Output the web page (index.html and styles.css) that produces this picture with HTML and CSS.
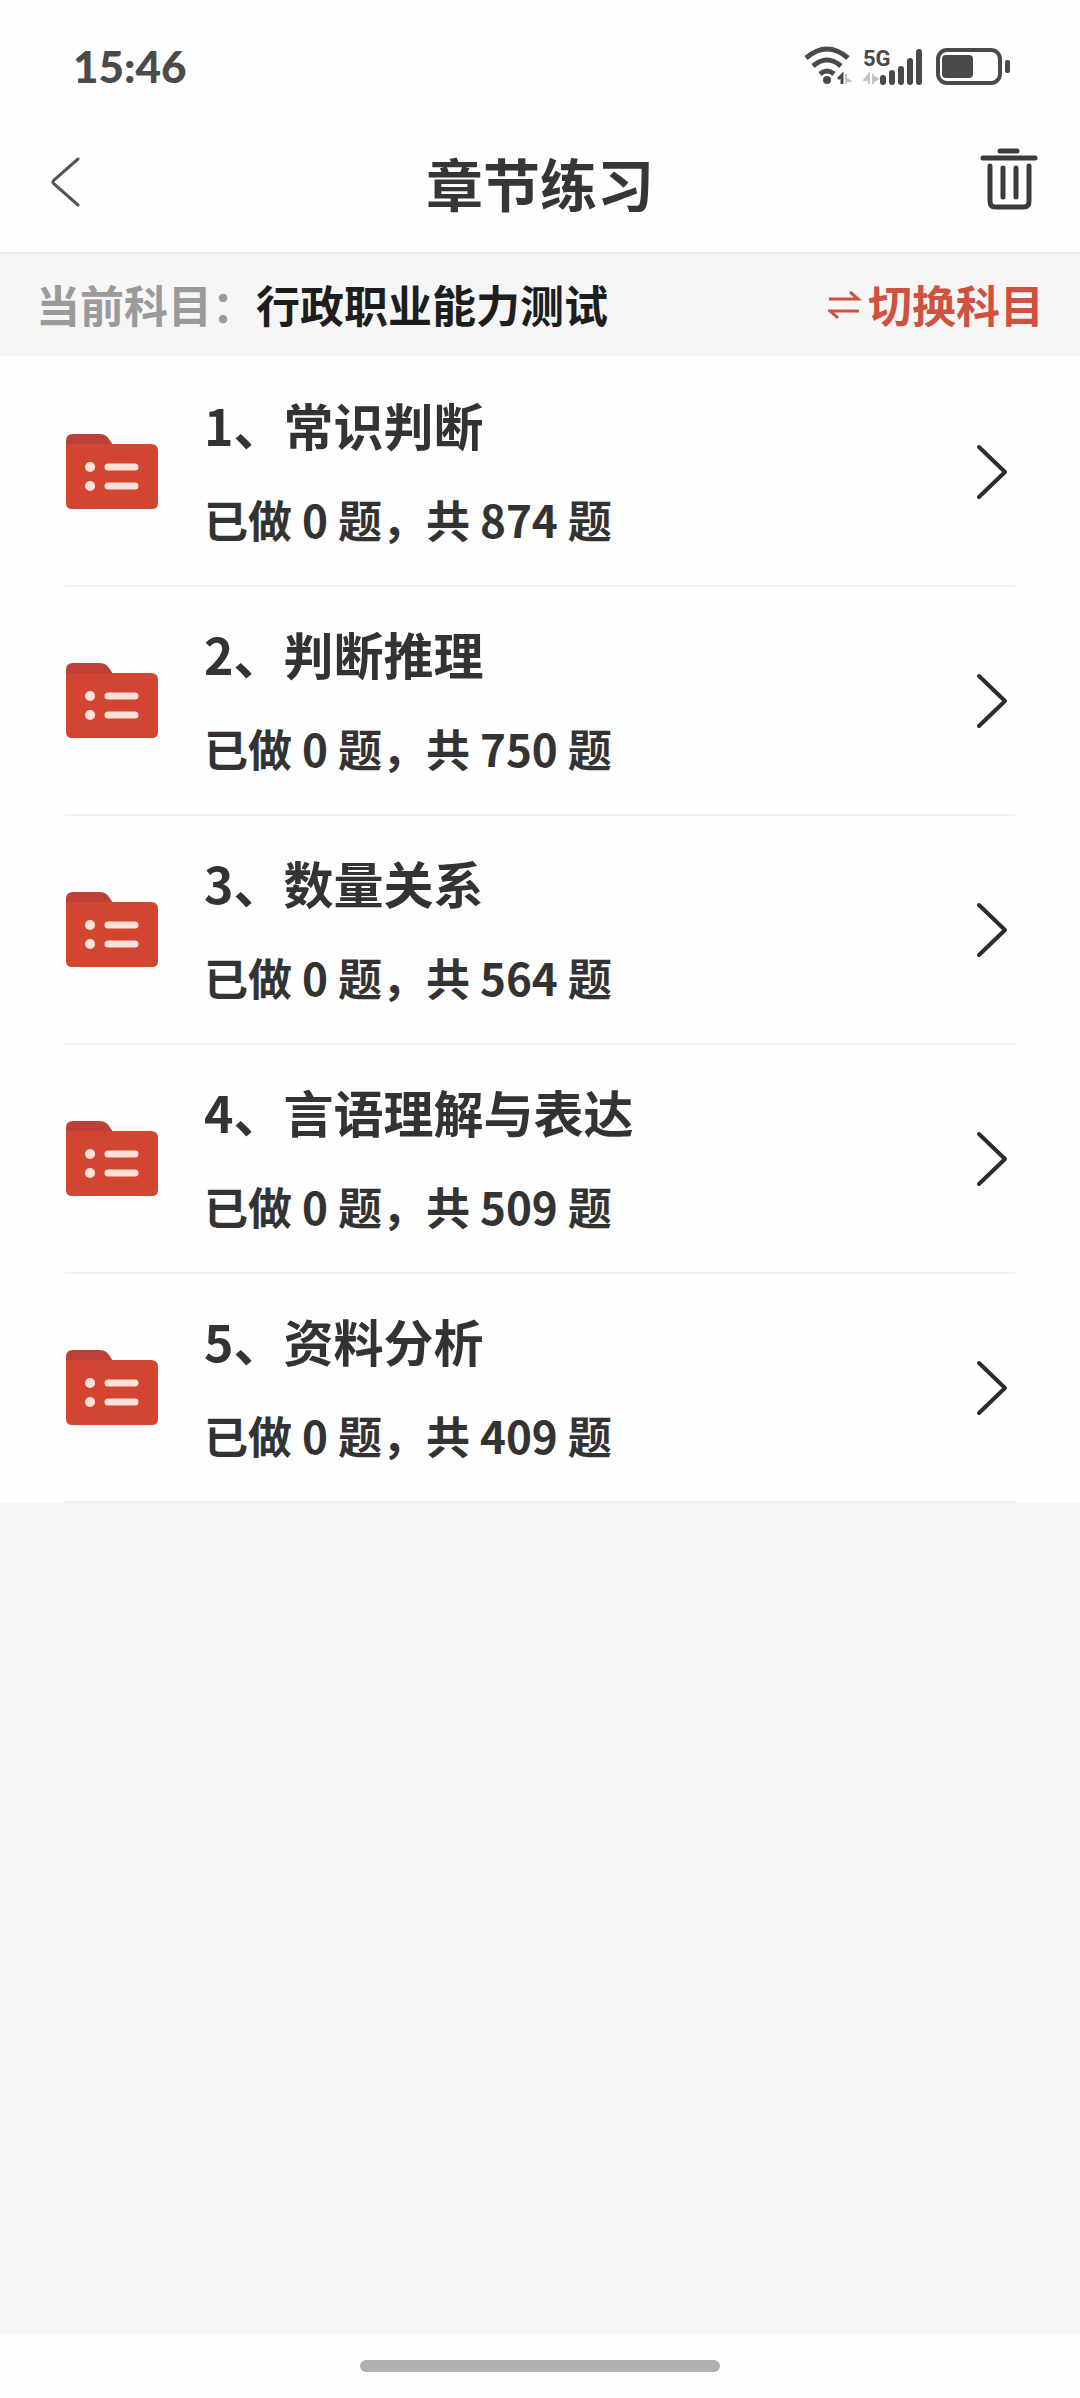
FILE: index.html
```html
<!DOCTYPE html>
<html lang="zh-CN">
  <head>
    <meta charset="UTF-8" />
    <meta name="viewport" content="width=device-width, initial-scale=1.0" />
    <title>章节练习</title>
    <link rel="stylesheet" href="styles.css">
  </head>
  <body>
    <svg class="symbols" aria-hidden="true">
      <symbol id="folder" viewBox="0 0 94 78">
        <path d="M1 30V8Q1 1 8 1H34Q41 1 44 6L50 15V30Z" fill="#bc4038" />
        <path d="M1 11H86Q93 11 93 18V70Q93 76 87 76H7Q1 76 1 70Z" fill="#d24530" />
        <path d="M25 34H25.1M25 53H25.1" stroke="#ffe0d8" stroke-width="10" stroke-linecap="round" />
        <path d="M43 34H70M43 53H70" stroke="#ffe0d8" stroke-width="7" stroke-linecap="round" />
      </symbol>
      <symbol id="arrow" viewBox="0 0 32 56">
        <path d="M3 3L29 28L3 53" fill="none" stroke="#2c2c2c" stroke-width="4" stroke-linecap="round" stroke-linejoin="round" />
      </symbol>
    </svg>

    <div class="status-bar">
      <span class="time">15:46</span>
      <div class="status-icons">
        <svg width="48" height="40" viewBox="0 0 48 40">
          <g fill="none" stroke="#4a4a4a" stroke-width="5">
            <path d="M2 12Q23 -6 44 12" />
            <path d="M9 20Q23 8 37 20" />
            <path d="M16 28Q23 22 30 28" />
          </g>
          <circle cx="23" cy="34" r="4" fill="#4a4a4a" />
          <path d="M38 38V29L34 33" fill="none" stroke="#4a4a4a" stroke-width="3" />
          <path d="M42 28V38M42 35H46L42 32" fill="#c4c4c4" stroke="#c4c4c4" stroke-width="2" />
        </svg>
        <div class="signal">
          <span class="network">5G</span>
          <svg width="62" height="40" viewBox="0 0 62 40">
            <path d="M6 38V28L1 34H6M10 28V38M10 36L15 33L10 30" fill="#c4c4c4" stroke="#c4c4c4" stroke-width="2" />
            <path d="M20 32V36M29 27V36M38 23V36M47 15V36M56 6V36" stroke="#4a4a4a" stroke-width="6" stroke-linecap="round" />
          </svg>
        </div>
        <svg width="74" height="40" viewBox="0 0 74 40">
          <rect x="2" y="4" width="62" height="33" rx="9" fill="none" stroke="#4a4a4a" stroke-width="4" />
          <rect x="6" y="9" width="31" height="23" rx="4" fill="#4a4a4a" />
          <rect x="69" y="14" width="5" height="13" rx="2" fill="#4a4a4a" />
        </svg>
      </div>
    </div>

    <header class="nav">
      <button class="nav-button back" type="button" aria-label="返回">
        <svg width="30" height="52" viewBox="0 0 30 52">
          <path d="M28 3L4 24Q2 26 4 28L28 49" fill="none" stroke="#555" stroke-width="3" stroke-linecap="round" />
        </svg>
      </button>
      <h1>章节练习</h1>
      <button class="nav-button clear" type="button" aria-label="清空">
        <svg width="58" height="68" viewBox="0 0 58 68">
          <g fill="none" stroke="#3b3b3b" stroke-width="5" stroke-linecap="round">
            <path d="M20 3H37M3 10H55" />
            <path d="M10 18V53Q10 59 15 59H44Q49 59 49 53V18" />
            <path d="M23 20V49M36 20V49" />
          </g>
        </svg>
      </button>
    </header>

    <section class="subject">
      <span class="subject-label">当前科目：</span>
      <span class="subject-name">行政职业能力测试</span>
      <button class="switch" type="button">
        <svg width="34" height="30" viewBox="0 0 34 30">
          <path d="M1 10H30L22 3M31 22H2L10 29" fill="none" stroke="#d0513f" stroke-width="3" />
        </svg>
        切换科目
      </button>
    </section>

    <main class="chapters">
      <a class="chapter" href="#">
        <svg class="folder"><use href="#folder" /></svg>
        <div class="chapter-text">
          <h2>1、常识判断</h2>
          <p>已做 0 题，共 874 题</p>
        </div>
        <svg class="arrow"><use href="#arrow" /></svg>
      </a>
      <a class="chapter" href="#">
        <svg class="folder"><use href="#folder" /></svg>
        <div class="chapter-text">
          <h2>2、判断推理</h2>
          <p>已做 0 题，共 750 题</p>
        </div>
        <svg class="arrow"><use href="#arrow" /></svg>
      </a>
      <a class="chapter" href="#">
        <svg class="folder"><use href="#folder" /></svg>
        <div class="chapter-text">
          <h2>3、数量关系</h2>
          <p>已做 0 题，共 564 题</p>
        </div>
        <svg class="arrow"><use href="#arrow" /></svg>
      </a>
      <a class="chapter" href="#">
        <svg class="folder"><use href="#folder" /></svg>
        <div class="chapter-text">
          <h2>4、言语理解与表达</h2>
          <p>已做 0 题，共 509 题</p>
        </div>
        <svg class="arrow"><use href="#arrow" /></svg>
      </a>
      <a class="chapter" href="#">
        <svg class="folder"><use href="#folder" /></svg>
        <div class="chapter-text">
          <h2>5、资料分析</h2>
          <p>已做 0 题，共 409 题</p>
        </div>
        <svg class="arrow"><use href="#arrow" /></svg>
      </a>
    </main>

    <footer class="home-bar">
      <div class="home-indicator"></div>
    </footer>
  </body>
</html>
```
FILE: styles.css
```css
* {
  box-sizing: border-box;
}

body {
  margin: 0;
  min-height: 100vh;
  display: flex;
  flex-direction: column;
  background-color: #f6f6f6;
  color: #333;
  font-family: "Noto Sans CJK SC", sans-serif;
  font-weight: 700;
}

svg {
  display: block;
  flex: none;
}

h1,
h2,
p {
  margin: 0;
}

button {
  padding: 0;
  border: 0;
  background: none;
  font: inherit;
}

.symbols {
  position: absolute;
  width: 0;
  height: 0;
}

.status-bar {
  display: flex;
  justify-content: space-between;
  align-items: center;
  height: 116px;
  padding: 16px 70px 0 73px;
  background-color: #fefefe;
}

.time {
  color: #4a4a4a;
  font-family: Lato, sans-serif;
  font-size: 44px;
  font-weight: 900;
}

.status-icons {
  display: flex;
  align-items: center;
  gap: 11px;
}

.signal {
  position: relative;
}

.network {
  position: absolute;
  top: 1px;
  left: 0;
  color: #4a4a4a;
  font-family: Roboto, sans-serif;
  font-size: 22px;
  font-weight: 700;
  line-height: 24px;
}

.nav {
  display: flex;
  justify-content: space-between;
  align-items: center;
  height: 138px;
  padding: 0 42px 4px;
  border-bottom: 2px solid #ececec;
  background-color: #fefefe;
}

.nav-button {
  display: flex;
  flex: 1;
}

.back svg {
  margin-left: 8px;
}

.clear {
  justify-content: flex-end;
}

.nav h1 {
  color: #363636;
  font-size: 57px;
  line-height: 80px;
}

.subject {
  display: flex;
  align-items: center;
  height: 102px;
  padding: 0 36px 2px;
  font-size: 44px;
}

.subject-label {
  color: #9a9a9a;
}

.subject-name {
  color: #1e1e1e;
}

.switch {
  display: flex;
  align-items: center;
  gap: 6px;
  margin-left: auto;
  color: #d0513f;
}

.chapters {
  padding: 2px 65px 0;
  background-color: #fefefe;
}

.chapter {
  display: flex;
  align-items: center;
  gap: 45px;
  padding: 32px 0;
  border-bottom: 2px solid #f1f1f1;
  color: inherit;
  text-decoration: none;
}

.chapter-text {
  flex: 1;
}

.chapter h2 {
  font-size: 50px;
  line-height: 68px;
}

.chapter p {
  margin-top: 27px;
  font-size: 44px;
  line-height: 68px;
}

.folder {
  width: 94px;
  height: 78px;
}

.arrow {
  width: 32px;
  height: 56px;
  margin-right: 7px;
}

.home-bar {
  display: flex;
  justify-content: center;
  align-items: center;
  height: 64px;
  margin-top: auto;
  background-color: #fdfdfd;
}

.home-indicator {
  width: 33.33%;
  height: 12px;
  border-radius: 6px;
  background-color: #b0b0b0;
}
```
